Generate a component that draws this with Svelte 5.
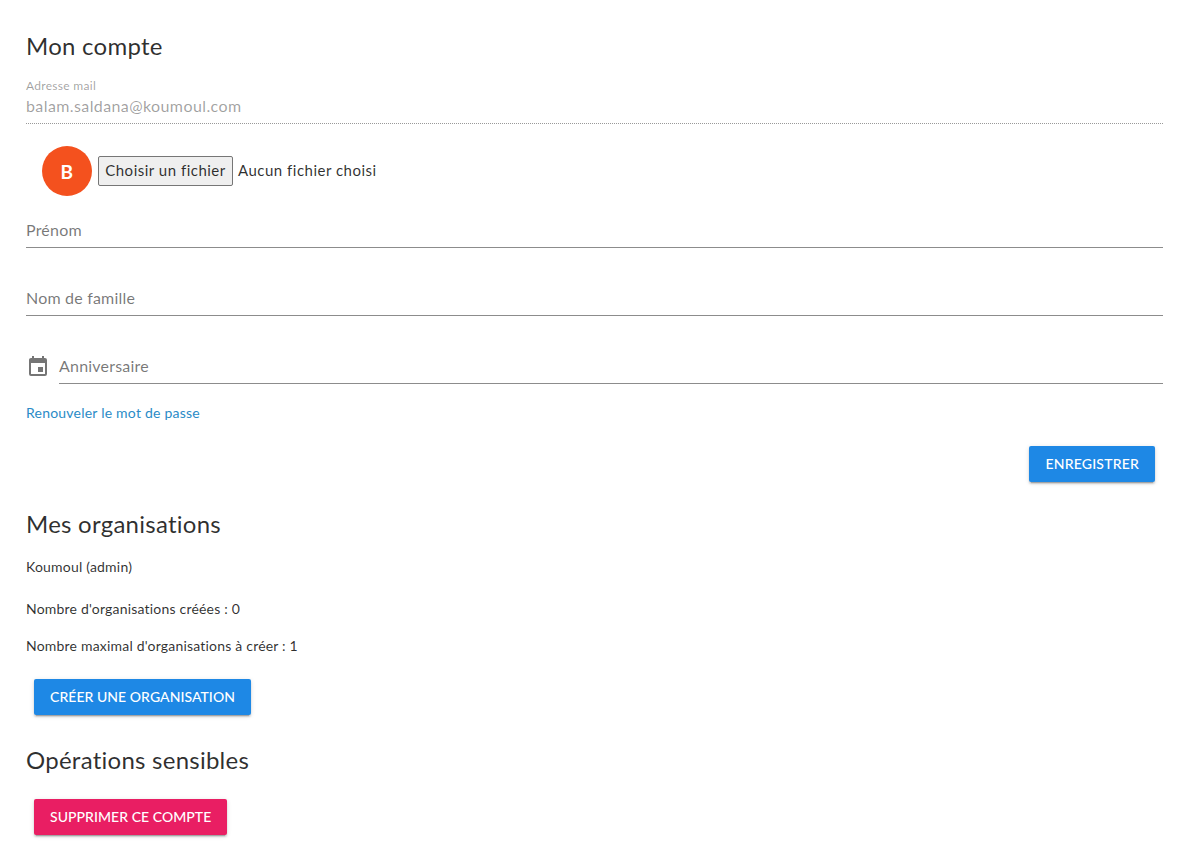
<script>
  let orgsCreated = 0;
  let orgsMax = 1;
</script>

<main class="page">
  <h2 class="title first">Mon compte</h2>

  <div class="field readonly">
    <span class="small-label">Adresse mail</span>
    <span class="value">balam.saldana@koumoul.com</span>
  </div>

  <div class="avatar-row">
    <div class="avatar">B</div>
    <button type="button" class="file-btn">Choisir un fichier</button>
    <span class="file-name">Aucun fichier choisi</span>
  </div>

  <div class="field firstname"><span class="placeholder">Prénom</span></div>
  <div class="field"><span class="placeholder">Nom de famille</span></div>

  <div class="date-row">
    <svg class="calendar" viewBox="0 0 24 24" width="24" height="24">
      <path d="M19 19H5V8h14m-3-7v2H8V1H6v2H5c-1.11 0-2 .89-2 2v14a2 2 0 0 0 2 2h14a2 2 0 0 0 2-2V5a2 2 0 0 0-2-2h-1V1m-1 11h-5v5h5v-5z" />
    </svg>
    <div class="field grow"><span class="placeholder">Anniversaire</span></div>
  </div>

  <a class="link" href="#renew">Renouveler le mot de passe</a>

  <div class="actions">
    <button type="button" class="btn primary save">Enregistrer</button>
  </div>

  <h2 class="title orgs">Mes organisations</h2>
  <p class="text org">Koumoul (admin)</p>
  <p class="text created">Nombre d'organisations créées : {orgsCreated}</p>
  <p class="text max">Nombre maximal d'organisations à créer : {orgsMax}</p>
  <button type="button" class="btn primary indent">Créer une organisation</button>

  <h2 class="title danger-title">Opérations sensibles</h2>
  <button type="button" class="btn danger indent">Supprimer ce compte</button>
</main>

<style>
  :global(body) {
    background: #fff;
  }

  .page {
    padding: 0 19px 0 26px;
    height: 847px;
    box-sizing: border-box;
    overflow: hidden;
    font-family: "Lato", "Open Sans", sans-serif;
    color: rgba(0, 0, 0, 0.82);
  }

  .title {
    margin: 0;
    font-size: 24px;
    font-weight: 400;
    line-height: 32px;
    letter-spacing: 0.25px;
  }

  .first { padding-top: 30px; }
  .orgs { margin-top: 26px; }
  .danger-title { margin-top: 29px; }

  .field {
    display: flex;
    flex-direction: column;
    justify-content: flex-end;
    height: 35px;
    margin-top: 32px;
    border-bottom: 1px solid #8c8c8c;
    font-size: 16px;
    letter-spacing: 0.2px;
  }

  .field .placeholder {
    color: rgba(0, 0, 0, 0.54);
    line-height: 24px;
    padding-bottom: 5px;
  }

  .field.firstname {
    margin-top: 16px;
  }

  .readonly {
    height: auto;
    margin-top: 18px;
    border-bottom: 1px dotted #999;
  }

  .small-label {
    font-size: 12px;
    line-height: 12px;
    margin-bottom: 2px;
    letter-spacing: 0.3px;
    color: rgba(0, 0, 0, 0.38);
  }

  .value {
    color: rgba(0, 0, 0, 0.38);
    line-height: 24px;
    letter-spacing: 0.4px;
    padding-bottom: 5px;
  }

  .avatar-row {
    display: flex;
    align-items: center;
    margin-top: 22px;
    padding-left: 16px;
    height: 50px;
    font-size: 15px;
    letter-spacing: 0.5px;
  }

  .avatar {
    width: 50px;
    height: 50px;
    border-radius: 50%;
    background: #f4511e;
    color: #fff;
    display: flex;
    align-items: center;
    justify-content: center;
    font-size: 19px;
    font-weight: 700;
    margin-right: 6px;
  }

  .file-btn {
    width: 135px;
    height: 30px;
    padding: 0 0 2px;
    background: #efefef;
    border: 1px solid #767676;
    border-radius: 2px;
    font: inherit;
    letter-spacing: inherit;
    color: rgba(0, 0, 0, 0.82);
    margin-right: 5px;
  }

  .file-name {
    margin-bottom: 2px;
  }

  .date-row {
    display: flex;
    align-items: flex-end;
    gap: 9px;
  }

  .grow {
    flex: 1;
  }

  .calendar {
    flex: none;
    fill: rgba(0, 0, 0, 0.54);
    margin-bottom: 5px;
  }

  .link {
    display: block;
    margin-top: 20px;
    font-size: 14px;
    line-height: 18px;
    letter-spacing: 0.22px;
    color: #2a8bc7;
    text-decoration: none;
  }

  .actions {
    display: flex;
    justify-content: flex-end;
    padding-right: 8px;
    margin-top: 24px;
  }

  .btn {
    display: inline-block;
    height: 36px;
    padding: 0 16px 2px;
    border: none;
    border-radius: 2px;
    color: #fff;
    font-family: inherit;
    font-size: 14px;
    font-weight: 500;
    letter-spacing: 0.05px;
    text-transform: uppercase;
    box-shadow: 0 3px 1px -2px rgba(0, 0, 0, 0.2), 0 2px 2px 0 rgba(0, 0, 0, 0.14), 0 1px 5px 0 rgba(0, 0, 0, 0.12);
  }

  .save {
    letter-spacing: 0.2px;
  }

  .primary { background: #1e88e5; }
  .danger { background: #e91e63; }

  .indent {
    display: block;
    margin-left: 8px;
  }

  .text {
    margin: 0;
    font-size: 14px;
    line-height: 18px;
    letter-spacing: 0.2px;
  }

  .org { margin-top: 18px; }
  .created { margin-top: 24px; }
  .max { margin-top: 19px; }

  .text + .btn {
    margin-top: 24px;
  }

  .danger-title + .btn {
    margin-top: 23px;
  }
</style>
